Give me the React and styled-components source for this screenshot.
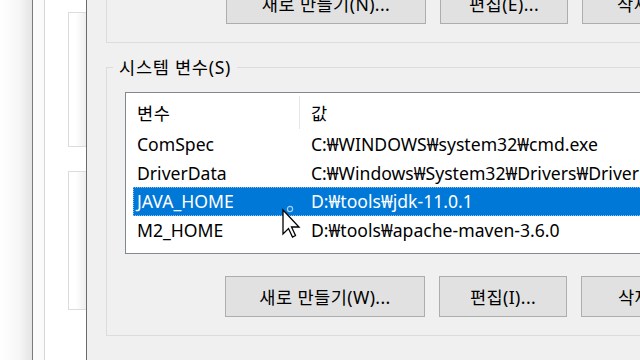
import styled, { createGlobalStyle } from "styled-components";

const GlobalStyle = createGlobalStyle`
  html, body {
    margin: 0;
    padding: 0;
    width: 640px;
    height: 360px;
    overflow: hidden;
    background: #f0f0f0;
  }
`;

const FONT = `"Noto Sans", "Noto Sans CJK KR", sans-serif`;

const Screen = styled.div`
  position: relative;
  display: flex;
  width: 640px;
  height: 360px;
  overflow: hidden;
  font-family: ${FONT};
  font-size: 17.6px;
  color: #000;
`;

// window behind the dialog
const Backdrop = styled.div`
  display: flex;
  width: 86px;
  flex-shrink: 0;
  background: #fff;
`;

const Shade = styled.div`
  width: 32px;
  background: linear-gradient(to right, #ffffff 0%, #f6f6f6 60%, #e4e4e4 100%);
  border-right: 1px solid #7a7a7a;
`;

const Strip = styled.div`
  width: 11px;
  background: #fafafa;
  border-right: 1px solid #d6d6d6;
`;

const BackPanel = styled.div`
  flex: 1;
  display: flex;
  flex-direction: column;
  gap: 24px;
  padding: 12px 0 0 23px;
`;

const BackBox = styled.div`
  height: ${(p) => p.$h}px;
  border: 1px solid #dcdcdc;
  border-right: none;
  background: linear-gradient(to right, #ffffff 40%, #eeeeee 100%);
`;

const Dialog = styled.div`
  flex: 1;
  min-width: 0;
  display: flex;
  flex-direction: column;
  padding-left: 19px;
  background: #f0f0f0;
  border-left: 1px solid #6b6b6b;
`;

const UserGroup = styled.div`
  margin: -30px -40px 0 0;
  padding: 13px 0 18px 119px;
  border: 1px solid #dcdcdc;
  border-top: none;
`;

const ButtonRow = styled.div`
  display: flex;
  gap: 14px;
  margin-top: ${(p) => p.$top || 0}px;
  margin-left: ${(p) => p.$indent || 0}px;
`;

const Button = styled.div`
  flex-shrink: 0;
  width: ${(p) => p.$w}px;
  height: 41px;
  box-sizing: border-box;
  display: flex;
  align-items: center;
  justify-content: center;
  background: #e1e1e1;
  border: 1px solid #adadad;
  white-space: nowrap;
  letter-spacing: 0.4px;
`;

const SystemGroup = styled.fieldset`
  margin: 12px -40px 0 0;
  padding: 13px 0 18px 18px;
  min-width: 0;
  border: 1px solid #dcdcdc;
`;

const Legend = styled.legend`
  margin-left: -12px;
  padding: 0 6px;
  line-height: 24px;
  letter-spacing: 0.7px;
`;

const List = styled.div`
  height: 162px;
  box-sizing: border-box;
  margin-right: -20px;
  background: #fff;
  border: 1px solid #828790;
`;

const Header = styled.div`
  display: flex;
  height: 37px;
`;

const HeaderCell = styled.div`
  display: flex;
  align-items: center;
  width: ${(p) => (p.$w ? `${p.$w}px` : "auto")};
  flex: ${(p) => (p.$w ? "none" : 1)};
  box-sizing: border-box;
  padding-left: 11px;
  margin: 3px 0 1px;
  letter-spacing: 0.5px;
  border-right: ${(p) => (p.$w ? "1px solid #e5e5e5" : "none")};
`;

const Row = styled.div`
  display: flex;
  align-items: center;
  height: 28.5px;
  margin-left: 7px;
  box-sizing: border-box;
  white-space: nowrap;
  background: ${(p) => (p.$selected ? "#0078d7" : "transparent")};
  color: ${(p) => (p.$selected ? "#fff" : "#000")};
  outline: ${(p) => (p.$selected ? "1px dotted #8cc0ec" : "none")};
  outline-offset: -1px;
`;

const NameCell = styled.div`
  width: 167px;
  flex-shrink: 0;
  box-sizing: border-box;
  padding-left: 4px;
`;

const ValueCell = styled.div`
  padding-left: 11px;
`;

const Cursor = styled.svg`
  position: absolute;
  left: 282px;
  top: 204px;
`;

const rows = [
  { name: "ComSpec", value: "C:₩WINDOWS₩system32₩cmd.exe" },
  { name: "DriverData", value: "C:₩Windows₩System32₩Drivers₩DriverData" },
  { name: "JAVA_HOME", value: "D:₩tools₩jdk-11.0.1", selected: true },
  { name: "M2_HOME", value: "D:₩tools₩apache-maven-3.6.0" },
];

const App = () => {
  return (
    <>
      <GlobalStyle />
      <Screen>
        <Backdrop>
          <Shade />
          <Strip />
          <BackPanel>
            <BackBox $h={133} />
            <BackBox $h={137} />
          </BackPanel>
        </Backdrop>
        <Dialog>
          <UserGroup>
            <ButtonRow>
              <Button $w={200}>새로 만들기(N)...</Button>
              <Button $w={128}>편집(E)...</Button>
              <Button $w={128}>삭제(D)</Button>
            </ButtonRow>
          </UserGroup>
          <SystemGroup>
            <Legend>시스템 변수(S)</Legend>
            <List>
              <Header>
                <HeaderCell $w={174}>변수</HeaderCell>
                <HeaderCell>값</HeaderCell>
              </Header>
              {rows.map((r) => (
                <Row key={r.name} $selected={r.selected}>
                  <NameCell>{r.name}</NameCell>
                  <ValueCell>{r.value}</ValueCell>
                </Row>
              ))}
            </List>
            <ButtonRow $indent={100} $top={22}>
              <Button $w={200}>새로 만들기(W)...</Button>
              <Button $w={128}>편집(I)...</Button>
              <Button $w={128}>삭제(L)</Button>
            </ButtonRow>
          </SystemGroup>
        </Dialog>
        <Cursor width="24" height="36" viewBox="0 0 24 36">
          <circle cx="8" cy="5" r="2.6" fill="none" stroke="#a9d0f2" strokeWidth="1.2" />
          <polygon
            points="1,6 1,30 6.5,24.5 10.5,33 13.5,31.5 9.5,23 17,23"
            fill="#fff"
            stroke="#000"
            strokeWidth="1.3"
            strokeLinejoin="miter"
          />
        </Cursor>
      </Screen>
    </>
  );
};

export default App;
